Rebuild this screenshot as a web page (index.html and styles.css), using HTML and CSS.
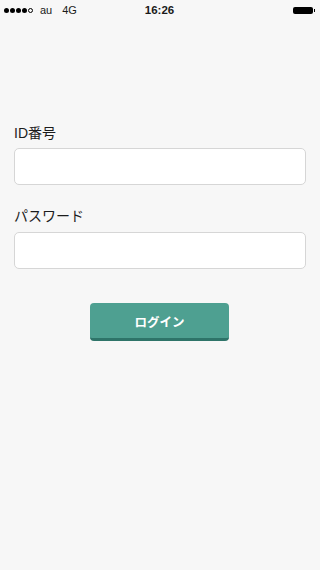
FILE: index.html
```html
<!DOCTYPE html>
<html lang="ja">
<head>
<meta charset="utf-8">
<link rel="stylesheet" href="styles.css">
</head>
<body>
<div class="statusbar">
  <div class="sb-left">
    <span class="signal"><i class="dot"></i><i class="dot"></i><i class="dot"></i><i class="dot"></i><i class="dot empty"></i></span>
    <span class="carrier">au</span>
    <span class="net">4G</span>
  </div>
  <div class="sb-time">16:26</div>
  <div class="sb-right"><span class="battery"></span></div>
</div>
<main class="form">
  <label class="label">ID番号</label>
  <input class="field" type="text">
  <label class="label label-second">パスワード</label>
  <input class="field" type="password">
  <div class="actions">
    <button class="login">ログイン</button>
  </div>
</main>
</body>
</html>
```
FILE: styles.css
```css
html, body {
  margin: 0;
  padding: 0;
  background: #f7f7f7;
  font-family: "Liberation Sans", "Noto Sans CJK JP", sans-serif;
  color: #1a1a1a;
}
.statusbar {
  height: 20px;
  display: grid;
  grid-template-columns: 1fr auto 1fr;
  align-items: center;
  font-size: 11px;
  padding: 0 5px 0 4px;
}
.sb-left {
  display: flex;
  align-items: center;
}
.signal {
  display: flex;
  gap: 1px;
  margin-right: 7px;
}
.dot {
  width: 5px;
  height: 5px;
  border-radius: 50%;
  background: #000;
  box-sizing: border-box;
}
.dot.empty {
  background: transparent;
  border: 1px solid #000;
}
.carrier {
  margin-right: 10px;
}
.sb-time {
  font-weight: bold;
  font-size: 11.5px;
}
.sb-right {
  display: flex;
  justify-content: flex-end;
}
.battery {
  width: 20px;
  height: 7px;
  background: #000;
  border-radius: 2px;
  position: relative;
  margin-right: 2px;
}
.battery::after {
  content: "";
  position: absolute;
  right: -2px;
  top: 2px;
  width: 1px;
  height: 3px;
  background: #000;
}
.form {
  display: flex;
  flex-direction: column;
  padding: 103px 14px 0;
}
.label {
  font-size: 14px;
  line-height: 20px;
  height: 20px;
  margin-bottom: 5px;
  color: #1c1c1c;
}
.label-second {
  margin-top: 21px;
  margin-bottom: 6px;
}
.field {
  box-sizing: border-box;
  height: 37px;
  width: 100%;
  border: 1px solid #d6d6d6;
  border-radius: 5px;
  background: #fff;
  margin: 0;
  padding: 0 10px;
  outline: none;
}
.actions {
  display: flex;
  justify-content: center;
  padding-top: 34px;
}
.login {
  box-sizing: border-box;
  width: 139px;
  height: 38px;
  border: none;
  border-bottom: 3px solid #2e7469;
  border-radius: 4px;
  background: #4ea091;
  color: #fff;
  font-family: "Liberation Sans", "Noto Sans CJK JP", sans-serif;
  font-weight: bold;
  font-size: 12.5px;
  padding: 2px 0 0;
  margin-left: -1px;
}
```
